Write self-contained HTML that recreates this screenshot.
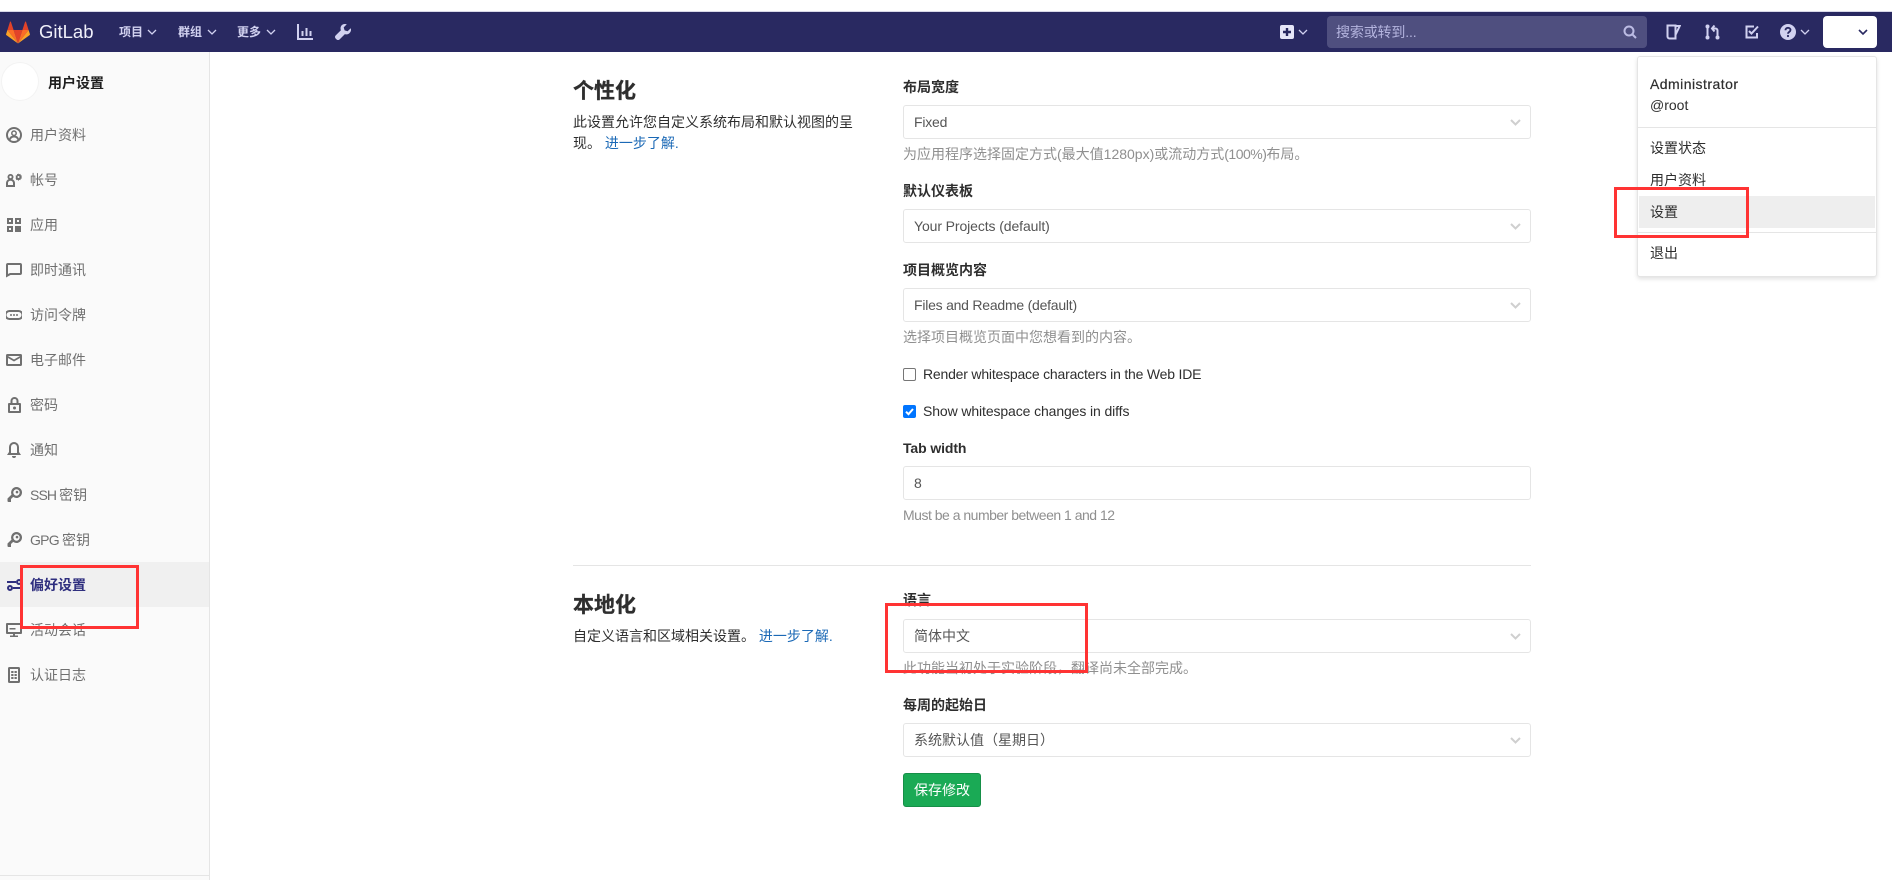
<!DOCTYPE html>
<html lang="zh-CN"><head><meta charset="utf-8"><title>偏好设置</title>
<style>
html,body{margin:0;padding:0;width:1892px;height:880px;overflow:hidden;background:#fff}
body{font-family:"Liberation Sans","Noto Sans CJK SC",sans-serif;font-size:14px;color:#2e2e2e;position:relative}
.a,.t,svg.i{position:absolute}
.t{line-height:20px;height:20px;white-space:nowrap}
.nav{left:0;top:11px;width:1892px;height:41px;background:#292961;border-top:1px solid #d8d8e8;box-sizing:border-box}
.nl{color:#d1d1f0;font-size:12px;font-weight:700}
.side{left:0;top:52px;width:209px;height:828px;background:#fafafa;border-right:1px solid #e5e5e5}
.s{left:30px;color:#707070}
svg.i{fill:#707070}
.lb{left:903px;font-weight:700;color:#2e2e2e}
.sel{left:903px;width:628px;height:34px;box-sizing:border-box;border:1px solid #e5e5e5;border-radius:3px;background:#fff;line-height:32px;padding-left:10px;color:#555}
.help{left:903px;color:#8f8f8f}
.h{left:573px;font-size:21px;font-weight:700;color:#2e2e2e;line-height:28px;height:28px;-webkit-text-stroke:.3px #2e2e2e}
.lk{color:#1b69b6}
.red{box-sizing:border-box;border:3px solid #ff3333;z-index:5}
.m{left:1650px;color:#2e2e2e}
.chev{fill:none;stroke:#cfcfcf;stroke-width:2}
.nc{fill:none;stroke:#d1d1f0;stroke-width:1.300}
</style></head><body>

<div class="a nav"></div>
<svg class="a" style="left:6px;top:21px" width="24" height="23" viewBox="0 0 24 23">
<path fill="#e24329" d="M12 22.500 16.400 9H7.600z"/><path fill="#fc6d26" d="M12 22.500 7.600 9H1.400z"/><path fill="#fca326" d="M1.400 9 .1 13.100c-.1.400 0 .8.300 1L12 22.500z"/><path fill="#e24329" d="M1.400 9h6.200L4.900.8c-.1-.4-.7-.4-.9 0z"/><path fill="#fc6d26" d="M12 22.500 16.400 9h6.200z"/><path fill="#fca326" d="m22.600 9 1.300 4.100c.1.400 0 .8-.3 1L12 22.500z"/><path fill="#e24329" d="M22.600 9h-6.200L19.100.8c.1-.4.7-.4.9 0z"/></svg>
<div class="t" style="left:39px;top:21px;color:#f0f0fa;font-size:18.500px;line-height:22px;height:22px">GitLab</div>
<div class="t nl" style="left:119px;top:22px">项目</div>
<svg class="a nc" style="left:147px;top:29px" width="10" height="7" viewBox="0 0 10 7"><path d="M1 1l4 4 4-4"/></svg>
<div class="t nl" style="left:178px;top:22px">群组</div>
<svg class="a nc" style="left:207px;top:29px" width="10" height="7" viewBox="0 0 10 7"><path d="M1 1l4 4 4-4"/></svg>
<div class="t nl" style="left:237px;top:22px">更多</div>
<svg class="a nc" style="left:266px;top:29px" width="10" height="7" viewBox="0 0 10 7"><path d="M1 1l4 4 4-4"/></svg>
<svg class="a" style="left:297px;top:24px" width="16" height="16" viewBox="0 0 16 16" fill="none" stroke="#d1d1f0" stroke-width="2"><path d="M1 0v15h15M5.500 7v5M9.500 4v8M13.500 7v5"/></svg>
<svg class="a" style="left:335px;top:24px" width="16" height="16" viewBox="0 0 16 16" fill="#d1d1f0"><path d="M15.700 4.200 12.600 7.300l-3-.9-.9-3L11.800.3C9.700-.4 7.400.1 6.300 1.800 5.400 3.100 5.300 4.800 5.900 6.200L.6 11.500c-.8.800-.8 2.100 0 3l1 1c.8.800 2.100.8 2.900 0l5.400-5.400c1.400.5 3 .3 4.200-.6 1.700-1.200 2.400-3.500 1.600-5.300z"/></svg>

<svg class="a" style="left:1280px;top:25px" width="14" height="14" viewBox="0 0 14 14"><rect width="14" height="14" rx="2" fill="#e6e6f8"/><path d="M7 3v8M3 7h8" stroke="#292961" stroke-width="2.400"/></svg>
<svg class="a nc" style="left:1298px;top:29px" width="10" height="7" viewBox="0 0 10 7"><path d="M1 1l4 4 4-4"/></svg>
<div class="a" style="left:1327px;top:16px;width:320px;height:32px;background:#4f4f7f;border-radius:4px"></div>
<div class="t" style="left:1336px;top:22px;color:#b4b4de;letter-spacing:-.15px">搜索或转到...</div>
<svg class="a" style="left:1623px;top:25px" width="14" height="14" viewBox="0 0 14 14" fill="none" stroke="#bcbce4" stroke-width="2"><circle cx="6" cy="6" r="4.500"/><path d="M9.500 9.500 13 13"/></svg>

<svg class="a" style="left:1666px;top:24px" width="15" height="16" viewBox="0 0 15 16" fill="none" stroke="#d1d1f0" stroke-width="2"><path d="M1.500 1.500h8v13H3.500a2 2 0 0 1-2-2zM9.500 2h4.200l-4 8.500"/></svg>
<svg class="a" style="left:1705px;top:24px" width="15" height="16" viewBox="0 0 15 16" fill="none" stroke="#d1d1f0" stroke-width="2"><circle cx="2.500" cy="2.500" r="1" /><circle cx="2.500" cy="13.500" r="1"/><circle cx="12.500" cy="13.500" r="1"/><path d="M2.500 3v10M12.500 13V6.500a2 2 0 0 0-2-2H8M9.500 1.500 7 4.500l2.500 3"/></svg>
<svg class="a" style="left:1745px;top:25px" width="14" height="14" viewBox="0 0 14 14" fill="none" stroke="#d1d1f0" stroke-width="2"><path d="M12 8v4.500H1.500V1.500H9M4 6l2.500 2.500L13 1.500"/></svg>
<svg class="a" style="left:1780px;top:24px" width="16" height="16" viewBox="0 0 16 16"><circle cx="8" cy="8" r="8" fill="#d1d1f0"/><path d="M5.500 6.200C5.500 4.700 6.600 3.800 8 3.800s2.500.9 2.500 2.200c0 1.800-2.500 1.900-2.500 3.700" fill="none" stroke="#292961" stroke-width="1.800"/><circle cx="8" cy="12" r="1.100" fill="#292961"/></svg>
<svg class="a nc" style="left:1800px;top:29px" width="10" height="7" viewBox="0 0 10 7"><path d="M1 1l4 4 4-4"/></svg>
<div class="a" style="left:1823px;top:16px;width:54px;height:32px;background:#fff;border-radius:4px"></div>
<svg class="a" style="left:1858px;top:29px" width="10" height="7" viewBox="0 0 10 7" fill="none" stroke="#292961" stroke-width="1.600"><path d="M1 1l4 4 4-4"/></svg>

<div class="a side"></div>
<div class="a" style="left:1px;top:62px;width:38px;height:39px;border-radius:50%;background:#fff;border:1px solid #f3f3f3;box-sizing:border-box"></div>
<div class="t" style="left:48px;top:73px;font-weight:700;color:#1f1f1f">用户设置</div>
<div class="a" style="left:0;top:562px;width:209px;height:45px;background:#f0f0f0"></div>
<div class="a" style="left:0;top:875px;width:209px;height:1px;background:#e5e5e5"></div>

<svg class="i" style="left:6px;top:127px" width="16" height="16" viewBox="0 0 16 16" fill="none"><circle cx="8" cy="8" r="7" fill="none" stroke="#707070" stroke-width="2"/><circle cx="8" cy="6.200" r="2.200" fill="none" stroke="#707070" stroke-width="1.500"/><path d="M3.800 12.500c.6-2 2.300-3 4.200-3s3.600 1 4.200 3" stroke="#707070" stroke-width="2" fill="none"/></svg>
<div class="t s" style="top:125px">用户资料</div>
<svg class="i" style="left:6px;top:172px" width="16" height="16" viewBox="0 0 16 16"><path fill-rule="evenodd" d="M4.500 2a3 3 0 0 0-2 5.200C1 7.900 0 9.300 0 11v4h9v-4c0-1.700-1-3.100-2.500-3.800A3 3 0 0 0 4.500 2zm0 1.800a1.200 1.200 0 1 1 0 2.400 1.200 1.200 0 0 1 0-2.400zM2 11c0-1.300 1.100-2.300 2.500-2.300S7 9.700 7 11v2H2z"/><path fill-rule="evenodd" d="M12.500 1l.6 1.200 1.300-.3.300 1.300 1.300.5-.6 1.300.6 1.300-1.300.5-.3 1.300-1.300-.3-.6 1.200-.9-1.200-1.300.3-.3-1.300L9.500 6.300 10 5 9.500 3.700l1.400-.5.300-1.300 1.300.3zM12.500 4a1 1 0 1 0 0 2 1 1 0 0 0 0-2z"/></svg>
<div class="t s" style="top:170px">帐号</div>
<svg class="i" style="left:7px;top:218px" width="15" height="14" viewBox="0 0 15 14"><path fill-rule="evenodd" d="M0 0h6v6H0zM2 2v2h2V2zM8 0h6v6H8zM10 2v2h2V2zM0 8h6v6H0zM2 10v2h2v-2zM8 8h6v6H8z"/></svg>
<div class="t s" style="top:215px">应用</div>
<svg class="i" style="left:6px;top:262px" width="16" height="16" viewBox="0 0 16 16"><path fill-rule="evenodd" d="M2 1h12a2 2 0 0 1 2 2v8a2 2 0 0 1-2 2H4.500L0 15.500V3a2 2 0 0 1 2-2zm0 2v9l2-1h10V3z"/></svg>
<div class="t s" style="top:260px">即时通讯</div>
<svg class="i" style="left:6px;top:307px" width="16" height="16" viewBox="0 0 16 16"><path fill-rule="evenodd" d="M3.500 3h9a5 5 0 0 1 0 10h-9a5 5 0 0 1 0-10zm0 2a3 3 0 0 0 0 6h9a3 3 0 0 0 0-6z"/><circle cx="5" cy="8" r="1"/><circle cx="8" cy="8" r="1"/><circle cx="11" cy="8" r="1"/></svg>
<div class="t s" style="top:305px">访问令牌</div>
<svg class="i" style="left:6px;top:352px" width="16" height="16" viewBox="0 0 16 16"><path fill-rule="evenodd" d="M1.500 2h13A1.500 1.500 0 0 1 16 3.500v9a1.500 1.500 0 0 1-1.500 1.500h-13A1.500 1.500 0 0 1 0 12.500v-9A1.500 1.500 0 0 1 1.500 2zM2 6v6h12V6l-6 3.500zm0-2 6 3.500L14 4z"/></svg>
<div class="t s" style="top:350px">电子邮件</div>
<svg class="i" style="left:8px;top:397px" width="13" height="16" viewBox="0 0 13 16"><path fill-rule="evenodd" d="M6.500 0A4 4 0 0 1 10.500 4v2H12a1 1 0 0 1 1 1v8a1 1 0 0 1-1 1H1a1 1 0 0 1-1-1V7a1 1 0 0 1 1-1h1.500V4a4 4 0 0 1 4-4zm0 2a2 2 0 0 0-2 2v2h4V4a2 2 0 0 0-2-2zM2 8v6h9V8zm4.500 1.500a1.500 1.500 0 1 1 0 3 1.500 1.500 0 0 1 0-3z"/></svg>
<div class="t s" style="top:395px">密码</div>
<svg class="i" style="left:7px;top:442px" width="14" height="16" viewBox="0 0 14 16"><path fill-rule="evenodd" d="M7 0a5 5 0 0 1 5 5v5l2 3H0l2-3V5a5 5 0 0 1 5-5zm0 2a3 3 0 0 0-3 3v6h6V5a3 3 0 0 0-3-3zM5 14h4a2 2 0 0 1-4 0z"/></svg>
<div class="t s" style="top:440px">通知</div>
<svg class="i" style="left:7px;top:487px" width="15" height="15" viewBox="0 0 15 15"><path fill-rule="evenodd" d="M9.500 0a5.500 5.500 0 1 1-3.300 9.900L4 12v3H1.500a1 1 0 0 1-1-1v-2.500l4-3.900A5.500 5.500 0 0 1 9.500 0zm0 2.300a3.200 3.200 0 1 0 0 6.400 3.200 3.200 0 0 0 0-6.400zm.5 1.500a1.300 1.300 0 1 1 0 2.600 1.300 1.300 0 0 1 0-2.600z"/></svg>
<div class="t s" style="top:485px"><span style="letter-spacing:-.9px">SSH </span>密钥</div>
<svg class="i" style="left:7px;top:532px" width="15" height="15" viewBox="0 0 15 15"><path fill-rule="evenodd" d="M9.500 0a5.500 5.500 0 1 1-3.300 9.900L4 12v3H1.500a1 1 0 0 1-1-1v-2.500l4-3.900A5.500 5.500 0 0 1 9.500 0zm0 2.300a3.200 3.200 0 1 0 0 6.400 3.200 3.200 0 0 0 0-6.400zm.5 1.500a1.300 1.300 0 1 1 0 2.600 1.300 1.300 0 0 1 0-2.600z"/></svg>
<div class="t s" style="top:530px"><span style="letter-spacing:-.75px">GPG </span>密钥</div>
<svg class="i" style="left:7px;top:578px;fill:none;stroke:#2f2f7f;stroke-width:2" width="15" height="14" viewBox="0 0 15 14"><path d="M0 4h9M6 10h9"/><circle cx="12" cy="4" r="2"/><circle cx="3" cy="10" r="2"/></svg>
<div class="t s" style="top:575px;color:#2f2f7f;font-weight:700">偏好设置</div>
<svg class="i" style="left:6px;top:622px" width="16" height="16" viewBox="0 0 16 16"><path fill-rule="evenodd" d="M1 1h14a1 1 0 0 1 1 1v9a1 1 0 0 1-1 1H9v1.500h3V15H4v-1.500h3V12H1a1 1 0 0 1-1-1V2a1 1 0 0 1 1-1zm1 2v7h12V3zM3.500 6h6v1.500h-6z"/></svg>
<div class="t s" style="top:620px">活动会话</div>
<svg class="i" style="left:8px;top:667px" width="12" height="16" viewBox="0 0 12 16"><path fill-rule="evenodd" d="M0 1.500A1.500 1.500 0 0 1 1.500 0h9A1.500 1.500 0 0 1 12 1.500v13a1.500 1.500 0 0 1-1.500 1.500h-9A1.500 1.500 0 0 1 0 14.500zM2 2v12h8V2zM3.200 4h2.300v2H3.200zm3.300 0h2.300v2H6.500zM3.200 7h2.300v2H3.200zm3.300 0h2.300v2H6.500zM3.200 10h2.300v2H3.200zm3.300 0h2.300v2H6.500z"/></svg>
<div class="t s" style="top:665px">认证日志</div>

<div class="t h" style="top:78px">个性化</div>
<div class="t" style="left:573px;top:112px">此设置允许您自定义系统布局和默认视图的呈</div>
<div class="t" style="left:573px;top:133px">现。 <span class="lk">进一步了解</span><span class="lk">.</span></div>

<div class="t lb" style="top:77px">布局宽度</div>
<div class="a sel" style="top:105px;letter-spacing:-.2px">Fixed</div>
<svg class="a chev" style="left:1510px;top:119px" width="11" height="8" viewBox="0 0 11 8"><path d="M1 1l4.500 4.500L10 1"/></svg>
<div class="t help" style="top:144px">为应用程序选择固定方式(最大值1280px)或流动方式<span style="letter-spacing:-.5px">(100%)</span>布局。</div>
<div class="t lb" style="top:181px">默认仪表板</div>
<div class="a sel" style="top:209px;letter-spacing:-.1px">Your Projects (default)</div>
<svg class="a chev" style="left:1510px;top:223px" width="11" height="8" viewBox="0 0 11 8"><path d="M1 1l4.500 4.500L10 1"/></svg>
<div class="t lb" style="top:260px">项目概览内容</div>
<div class="a sel" style="top:288px;letter-spacing:-.23px">Files and Readme (default)</div>
<svg class="a chev" style="left:1510px;top:302px" width="11" height="8" viewBox="0 0 11 8"><path d="M1 1l4.500 4.500L10 1"/></svg>
<div class="t help" style="top:327px">选择项目概览页面中您想看到的内容。</div>

<div class="a" style="left:903px;top:368px;width:13px;height:13px;box-sizing:border-box;border:1px solid #767676;border-radius:2px;background:#fff"></div>
<div class="t" style="left:923px;top:364px;letter-spacing:-.2px">Render whitespace characters in the Web IDE</div>
<svg class="a" style="left:903px;top:405px" width="13" height="13" viewBox="0 0 13 13"><rect width="13" height="13" rx="2" fill="#0075ff"/><path d="M3 6.700l2.500 2.500L10 4" fill="none" stroke="#fff" stroke-width="2"/></svg>
<div class="t" style="left:923px;top:401px;letter-spacing:-.11px">Show whitespace changes in diffs</div>
<div class="t lb" style="top:438px;letter-spacing:-.1px">Tab width</div>
<div class="a sel" style="top:466px">8</div>
<div class="t help" style="top:505px;letter-spacing:-.5px">Must be a number between 1 and 12</div>

<div class="a" style="left:573px;top:565px;width:958px;height:1px;background:#e5e5e5"></div>

<div class="t h" style="top:592px">本地化</div>
<div class="t" style="left:573px;top:626px">自定义语言和区域相关设置。 <span class="lk">进一步了解</span><span class="lk">.</span></div>
<div class="t lb" style="top:590px">语言</div>
<div class="a sel" style="top:619px">简体中文</div>
<svg class="a chev" style="left:1510px;top:633px" width="11" height="8" viewBox="0 0 11 8"><path d="M1 1l4.500 4.500L10 1"/></svg>
<div class="t help" style="top:658px">此功能当初处于实验阶段，翻译尚未全部完成。</div>
<div class="t lb" style="top:695px">每周的起始日</div>
<div class="a sel" style="top:723px">系统默认值（星期日）</div>
<svg class="a chev" style="left:1510px;top:737px" width="11" height="8" viewBox="0 0 11 8"><path d="M1 1l4.500 4.500L10 1"/></svg>
<div class="a" style="left:903px;top:773px;width:78px;height:34px;box-sizing:border-box;background:#1aaa55;border:1px solid #168f48;border-radius:3px;color:#fff;line-height:32px;padding-left:10px">保存修改</div>

<div class="a" style="left:1637px;top:56px;width:240px;height:221px;box-sizing:border-box;background:#fff;border:1px solid #e5e5e5;border-radius:3px;box-shadow:0 2px 4px rgba(0,0,0,.12)"></div>
<div class="t m" style="top:74px;letter-spacing:.46px;-webkit-text-stroke:.2px #2e2e2e">Administrator</div>
<div class="t m" style="top:95px">@root</div>
<div class="a" style="left:1638px;top:127px;width:238px;height:1px;background:#e5e5e5"></div>
<div class="t m" style="top:138px">设置状态</div>
<div class="t m" style="top:170px">用户资料</div>
<div class="a" style="left:1639px;top:196px;width:236px;height:32px;background:#eee"></div>
<div class="t m" style="top:202px">设置</div>
<div class="a" style="left:1638px;top:232px;width:238px;height:1px;background:#e5e5e5"></div>
<div class="t m" style="top:243px">退出</div>

<div class="a red" style="left:20px;top:565px;width:119px;height:64px"></div>
<div class="a red" style="left:1614px;top:187px;width:135px;height:51px"></div>
<div class="a red" style="left:885px;top:603px;width:203px;height:70px"></div>
</body></html>
